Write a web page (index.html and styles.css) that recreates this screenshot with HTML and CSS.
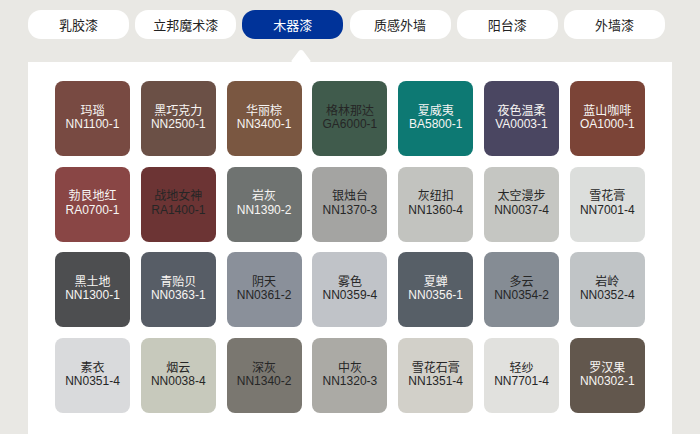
FILE: index.html
```html
<!DOCTYPE html>
<html lang="zh">
<head>
<meta charset="utf-8">
<link rel="stylesheet" href="styles.css">
</head>
<body>
<div class="page">
  <nav class="tabs">
    <a class="tab">乳胶漆</a>
    <a class="tab">立邦魔术漆</a>
    <a class="tab active">木器漆</a>
    <a class="tab">质感外墙</a>
    <a class="tab">阳台漆</a>
    <a class="tab">外墙漆</a>
  </nav>
  <section class="panel">
    <div class="grid">
      <div class="sw light-text" style="background:#784a42"><span>玛瑙</span><span>NN1100-1</span></div>
      <div class="sw light-text" style="background:#6b5046"><span>黑巧克力</span><span>NN2500-1</span></div>
      <div class="sw light-text" style="background:#7a5741"><span>华丽棕</span><span>NN3400-1</span></div>
      <div class="sw dark-text" style="background:#405b4c"><span>格林那达</span><span>GA6000-1</span></div>
      <div class="sw light-text" style="background:#0d7973"><span>夏威夷</span><span>BA5800-1</span></div>
      <div class="sw light-text" style="background:#4a4661"><span>夜色温柔</span><span>VA0003-1</span></div>
      <div class="sw light-text" style="background:#7b4437"><span>蓝山咖啡</span><span>OA1000-1</span></div>

      <div class="sw light-text" style="background:#894645"><span>勃艮地红</span><span>RA0700-1</span></div>
      <div class="sw dark-text" style="background:#6c3434"><span>战地女神</span><span>RA1400-1</span></div>
      <div class="sw light-text" style="background:#6f7371"><span>岩灰</span><span>NN1390-2</span></div>
      <div class="sw dark-text" style="background:#a4a4a2"><span>银烛台</span><span>NN1370-3</span></div>
      <div class="sw dark-text" style="background:#c2c3bf"><span>灰纽扣</span><span>NN1360-4</span></div>
      <div class="sw dark-text" style="background:#c5c6c2"><span>太空漫步</span><span>NN0037-4</span></div>
      <div class="sw dark-text" style="background:#dcdedc"><span>雪花膏</span><span>NN7001-4</span></div>

      <div class="sw light-text" style="background:#4d4e50"><span>黑土地</span><span>NN1300-1</span></div>
      <div class="sw light-text" style="background:#575d66"><span>青贻贝</span><span>NN0363-1</span></div>
      <div class="sw dark-text" style="background:#8a909a"><span>阴天</span><span>NN0361-2</span></div>
      <div class="sw dark-text" style="background:#c0c3c8"><span>雾色</span><span>NN0359-4</span></div>
      <div class="sw light-text" style="background:#575f67"><span>夏蝉</span><span>NN0356-1</span></div>
      <div class="sw dark-text" style="background:#858c94"><span>多云</span><span>NN0354-2</span></div>
      <div class="sw dark-text" style="background:#c0c4c6"><span>岩岭</span><span>NN0352-4</span></div>

      <div class="sw dark-text" style="background:#d9dadc"><span>素衣</span><span>NN0351-4</span></div>
      <div class="sw dark-text" style="background:#c7c9bc"><span>烟云</span><span>NN0038-4</span></div>
      <div class="sw dark-text" style="background:#7a7770"><span>深灰</span><span>NN1340-2</span></div>
      <div class="sw dark-text" style="background:#abaaa5"><span>中灰</span><span>NN1320-3</span></div>
      <div class="sw dark-text" style="background:#d2d0c9"><span>雪花石膏</span><span>NN1351-4</span></div>
      <div class="sw dark-text" style="background:#e1e1de"><span>轻纱</span><span>NN7701-4</span></div>
      <div class="sw light-text" style="background:#62574d"><span>罗汉果</span><span>NN0302-1</span></div>
    </div>
  </section>
</div>
</body>
</html>
```
FILE: styles.css
```css
* { box-sizing: border-box; }
html, body {
  margin: 0;
  padding: 0;
  height: 100%;
}
body {
  background: #e9e8e4;
  font-family: "Liberation Sans", "Noto Sans CJK SC", Arial, sans-serif;
  overflow: hidden;
}
.page {
  padding: 10px 0 0 28px;
  height: 100%;
  display: flex;
  flex-direction: column;
}
.tabs {
  display: flex;
  gap: 6.2px;
}
.tab {
  width: 101px;
  height: 29px;
  border-radius: 13px;
  background: #ffffff;
  color: #222222;
  font-size: 13px;
  display: flex;
  align-items: center;
  justify-content: center;
}
.tab.active {
  background: #003399;
  color: #ffffff;
}
.panel {
  position: relative;
  margin-top: 23px;
  width: 644px;
  flex: 1;
  background: #ffffff;
  padding: 19px 27px;
}
.panel::before {
  content: "";
  position: absolute;
  top: -9px;
  left: 265px;
  width: 16px;
  height: 16px;
  background: #ffffff;
  transform: rotate(45deg) skew(8deg, 8deg);
  border-radius: 4px 0 0 0;
}
.grid {
  display: grid;
  grid-template-columns: repeat(7, 75px);
  grid-auto-rows: 75px;
  gap: 10.7px 10.8px;
}
.sw {
  border-radius: 8px;
  display: flex;
  flex-direction: column;
  align-items: center;
  justify-content: center;
  font-size: 12px;
  line-height: 13.5px;
  padding-bottom: 1px;
}
.light-text { color: #f7f5f3; }
.dark-text { color: #262626; }
```
